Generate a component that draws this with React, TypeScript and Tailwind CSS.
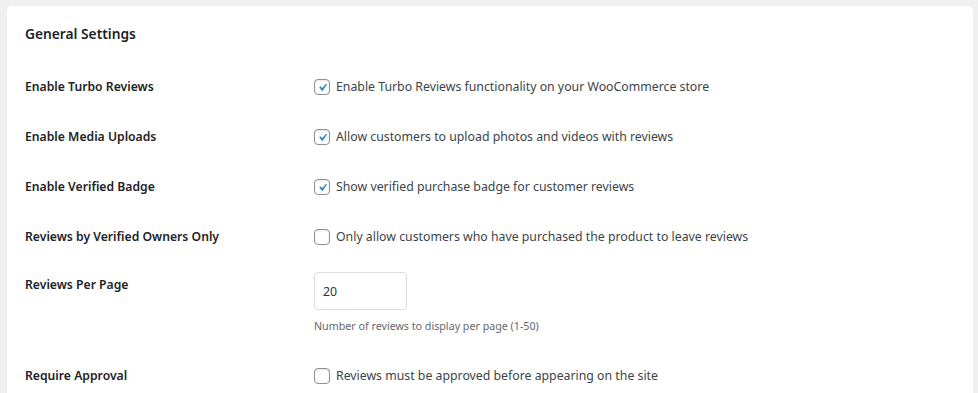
import React from "react"

const font = "font-['Noto_Sans',sans-serif]"

function Check({ on }: { on: boolean }) {
    return (
        <span className="w-4 h-4 shrink-0 rounded-[4px] border border-[#8c8f94] bg-white flex items-center justify-center shadow-[inset_0_1px_2px_rgba(0,0,0,0.1)]">
            {on && (
                <svg viewBox="0 0 20 20" className="w-[19px] h-[19px] -mr-[1px]">
                    <path d="M14.83 4.89l1.34.94-5.81 8.38H9.02L5.78 9.67l1.34-1.25 2.57 2.4z" fill="#3582c4" />
                </svg>
            )}
        </span>
    )
}

function CheckRow({ label, text, on }: { label: string; text: string; on: boolean }) {
    return (
        <div className="flex items-center h-[50px]">
            <div className="w-[289px] shrink-0 text-[12.2px] font-semibold text-[#1d2327]">{label}</div>
            <label className="flex items-center gap-[6px] text-[12.3px] text-[#3c434a]">
                <Check on={on} />
                <span>{text}</span>
            </label>
        </div>
    )
}

export default function App() {
    return (
        <div className={`${font} w-full h-[393px] bg-[#f0f0f1] pt-[6px] pl-[7px] pr-[5px] overflow-hidden`}>
            <div className="bg-white rounded-[5px] h-[420px] pl-[18px]">
                <div className="pt-[18px] h-[56px] text-[13.75px] font-semibold text-[#1d2327]">General Settings</div>

                <CheckRow label="Enable Turbo Reviews" text="Enable Turbo Reviews functionality on your WooCommerce store" on />
                <CheckRow label="Enable Media Uploads" text="Allow customers to upload photos and videos with reviews" on />
                <CheckRow label="Enable Verified Badge" text="Show verified purchase badge for customer reviews" on />
                <CheckRow label="Reviews by Verified Owners Only" text="Only allow customers who have purchased the product to leave reviews" on={false} />

                <div className="flex h-[89px] pt-[10px]">
                    <div className="w-[289px] shrink-0 pt-[4px] text-[12.2px] font-semibold text-[#1d2327]">Reviews Per Page</div>
                    <div className="flex flex-col">
                        <input
                            type="text"
                            defaultValue="20"
                            className="w-[93px] h-[38px] px-2 rounded-[4px] border border-[#dcdcde] text-[12.3px] text-[#2c3338] outline-none"
                        />
                        <p className="mt-[8px] text-[10.7px] text-[#646970]">Number of reviews to display per page (1-50)</p>
                    </div>
                </div>

                <CheckRow label="Require Approval" text="Reviews must be approved before appearing on the site" on={false} />
            </div>
        </div>
    )
}
